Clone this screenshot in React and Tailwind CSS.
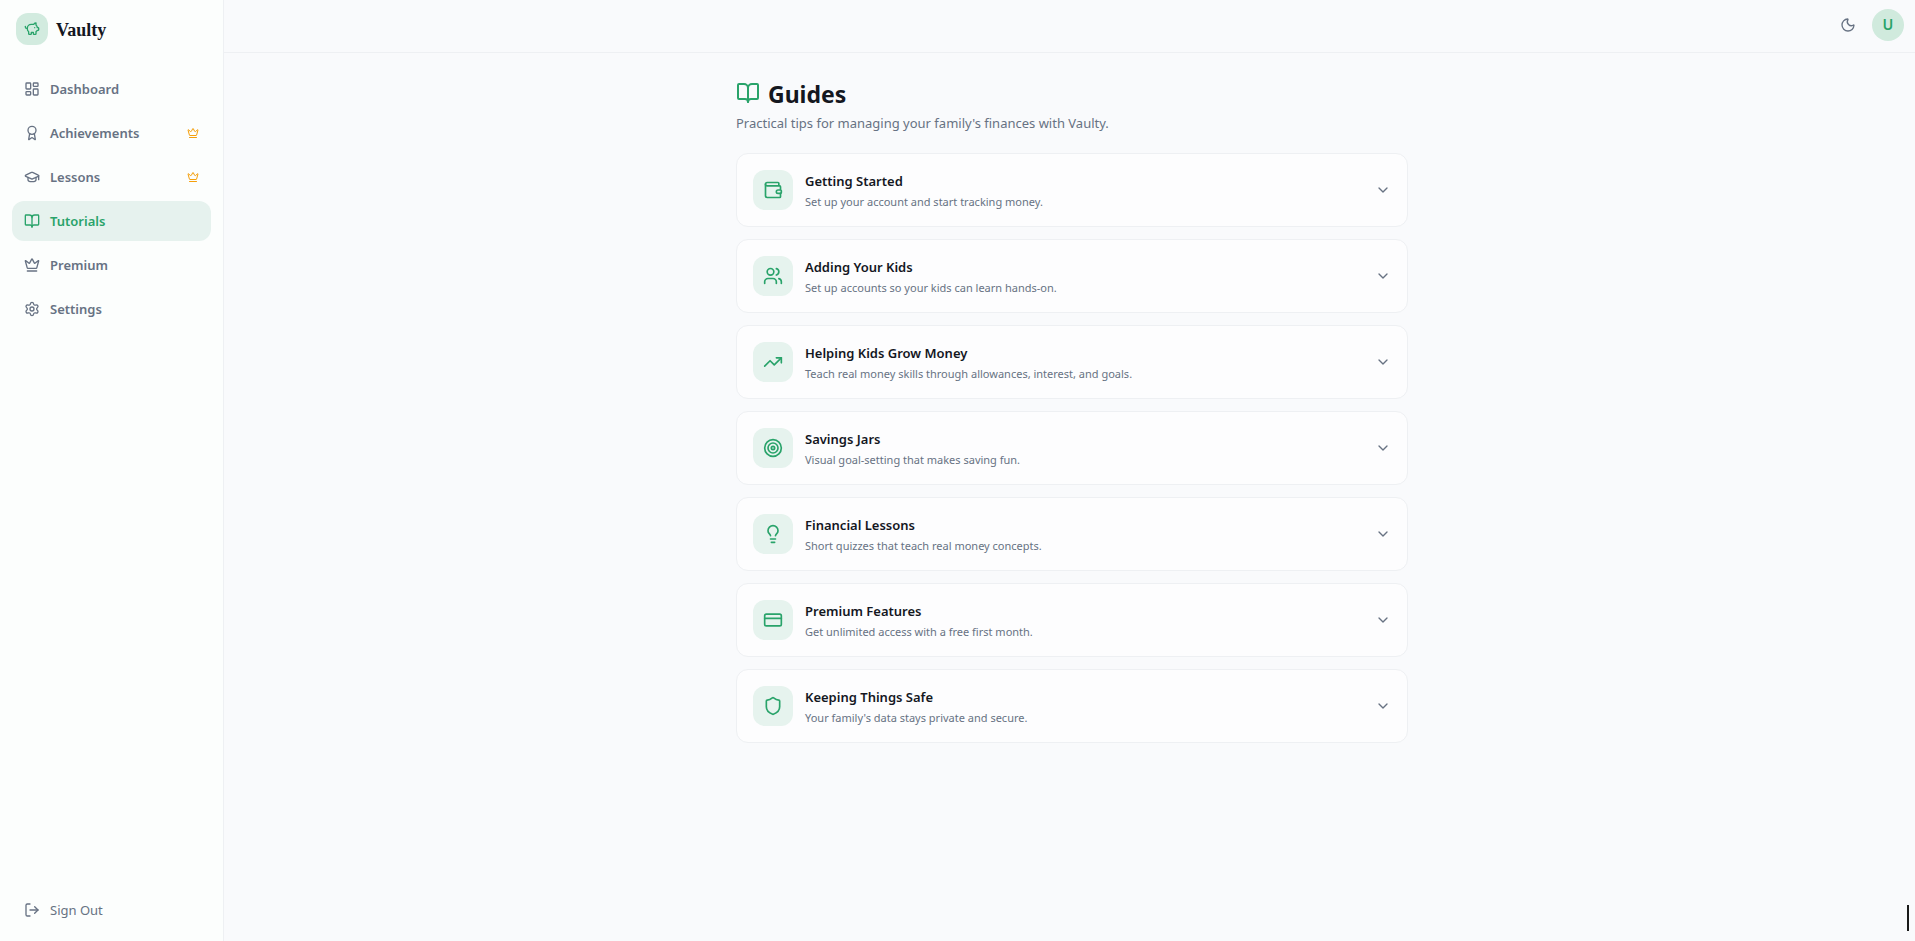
import React, { useState } from 'react';
import {
  LayoutDashboard, Award, GraduationCap, BookOpen, Crown, Settings, LogOut, Moon,
  PiggyBank, Wallet, Users, TrendingUp, Target, Lightbulb, CreditCard, Shield, ChevronDown,
} from 'lucide-react';

const navItems = [
  { label: 'Dashboard', icon: LayoutDashboard },
  { label: 'Achievements', icon: Award, premium: true },
  { label: 'Lessons', icon: GraduationCap, premium: true },
  { label: 'Tutorials', icon: BookOpen },
  { label: 'Premium', icon: Crown },
  { label: 'Settings', icon: Settings },
];

const guides = [
  { title: 'Getting Started', desc: 'Set up your account and start tracking money.', icon: Wallet },
  { title: 'Adding Your Kids', desc: 'Set up accounts so your kids can learn hands-on.', icon: Users },
  { title: 'Helping Kids Grow Money', desc: 'Teach real money skills through allowances, interest, and goals.', icon: TrendingUp },
  { title: 'Savings Jars', desc: 'Visual goal-setting that makes saving fun.', icon: Target },
  { title: 'Financial Lessons', desc: 'Short quizzes that teach real money concepts.', icon: Lightbulb },
  { title: 'Premium Features', desc: 'Get unlimited access with a free first month.', icon: CreditCard },
  { title: 'Keeping Things Safe', desc: "Your family's data stays private and secure.", icon: Shield },
];

const Sidebar = ({ active, onSelect }) => (
  <aside className="flex w-56 shrink-0 flex-col border-r border-[#eef0f3] bg-[#fcfefd]">
    <div className="flex items-center gap-2 px-4 pt-[13px] pb-3">
      <div className="flex h-8 w-8 items-center justify-center rounded-xl bg-[#d2ebdf]">
        <PiggyBank className="h-4 w-4 text-[#29a36a]" />
      </div>
      <span className="pt-px font-['Liberation_Serif',serif] text-lg leading-6 font-bold text-[#14171f]">Vaulty</span>
    </div>

    <nav className="flex flex-1 flex-col gap-1 p-3">
      {navItems.map(({ label, icon: Icon, premium }) => (
        <a
          key={label}
          href="#"
          onClick={() => onSelect(label)}
          className={
            label === active
              ? 'flex h-10 items-center gap-2.5 rounded-xl bg-[#e6f2ee] px-3 text-[13px] font-semibold text-[#29a36a]'
              : 'flex h-10 items-center gap-2.5 rounded-xl px-3 text-[13px] font-semibold text-[#677283]'
          }
        >
          <Icon className="h-4 w-4" />
          <span className="flex-1 pt-px">{label}</span>
          {premium && <Crown className="h-3 w-3 text-[#f59f0a]" />}
        </a>
      ))}
    </nav>

    <div className="px-3 pb-[11px]">
      <button className="flex h-10 w-full items-center gap-2.5 rounded-xl px-3 text-[13px] text-[#677283]">
        <LogOut className="h-4 w-4" />
        <span className="pt-px">Sign Out</span>
      </button>
    </div>
  </aside>
);

const GuideCard = ({ title, desc, icon: Icon, open, onToggle }) => (
  <button
    onClick={onToggle}
    aria-expanded={open}
    className="flex w-full items-center gap-3 rounded-xl border border-[#eef0f3] bg-[#fdfdfe] p-4 text-left"
  >
    <span className="flex h-10 w-10 shrink-0 items-center justify-center rounded-xl bg-[#e6f3ee]">
      <Icon className="h-5 w-5 text-[#29a36a]" />
    </span>
    <span className="flex-1 pt-px">
      <span className="block text-[13px] leading-5 font-semibold text-[#14171f]">{title}</span>
      <span className="block pt-[3px] text-[11px] leading-4 text-[#677283]">{desc}</span>
    </span>
    <ChevronDown className="h-4 w-4 text-[#677283]" />
  </button>
);

const App = () => {
  const [active, setActive] = useState('Tutorials');
  const [openGuide, setOpenGuide] = useState(null);

  return (
    <div className="flex min-h-screen bg-[#f9fafc] font-['Noto_Sans','Open_Sans',sans-serif]">
      <Sidebar active={active} onSelect={setActive} />

      <div className="flex flex-1 flex-col">
        <header className="flex items-center justify-end gap-2 border-b border-[#eef0f3] px-[11px] pt-[9px] pb-[11px]">
          <button aria-label="Toggle theme" className="flex h-8 w-8 items-center justify-center text-[#677283]">
            <Moon className="h-4 w-4" />
          </button>
          <button className="h-8 w-8 rounded-full bg-[#d0eadd] font-['Inter',sans-serif] text-sm font-semibold text-[#29a36a]">
            U
          </button>
        </header>

        <main className="flex-1 py-6 pr-4 pl-[21px]">
          <div className="mx-auto max-w-2xl">
            <h1 className="flex gap-2 text-[23px] leading-[34px] font-bold text-[#14171f]">
              <BookOpen className="mt-1 h-6 w-6 text-[#29a36a]" />
              Guides
            </h1>
            <p className="mt-0.5 text-[13px] leading-5 text-[#677283]">
              Practical tips for managing your family's finances with Vaulty.
            </p>

            <div className="mt-5 flex flex-col gap-3">
              {guides.map((guide) => (
                <GuideCard
                  key={guide.title}
                  {...guide}
                  open={openGuide === guide.title}
                  onToggle={() => setOpenGuide(openGuide === guide.title ? null : guide.title)}
                />
              ))}
            </div>
          </div>
        </main>
      </div>

      {/* chat launcher, collapsed */}
      <div className="fixed right-1.5 bottom-2.5 h-[26px] w-0.5 bg-[#1a1a1a]" />
    </div>
  );
};

export default App;
